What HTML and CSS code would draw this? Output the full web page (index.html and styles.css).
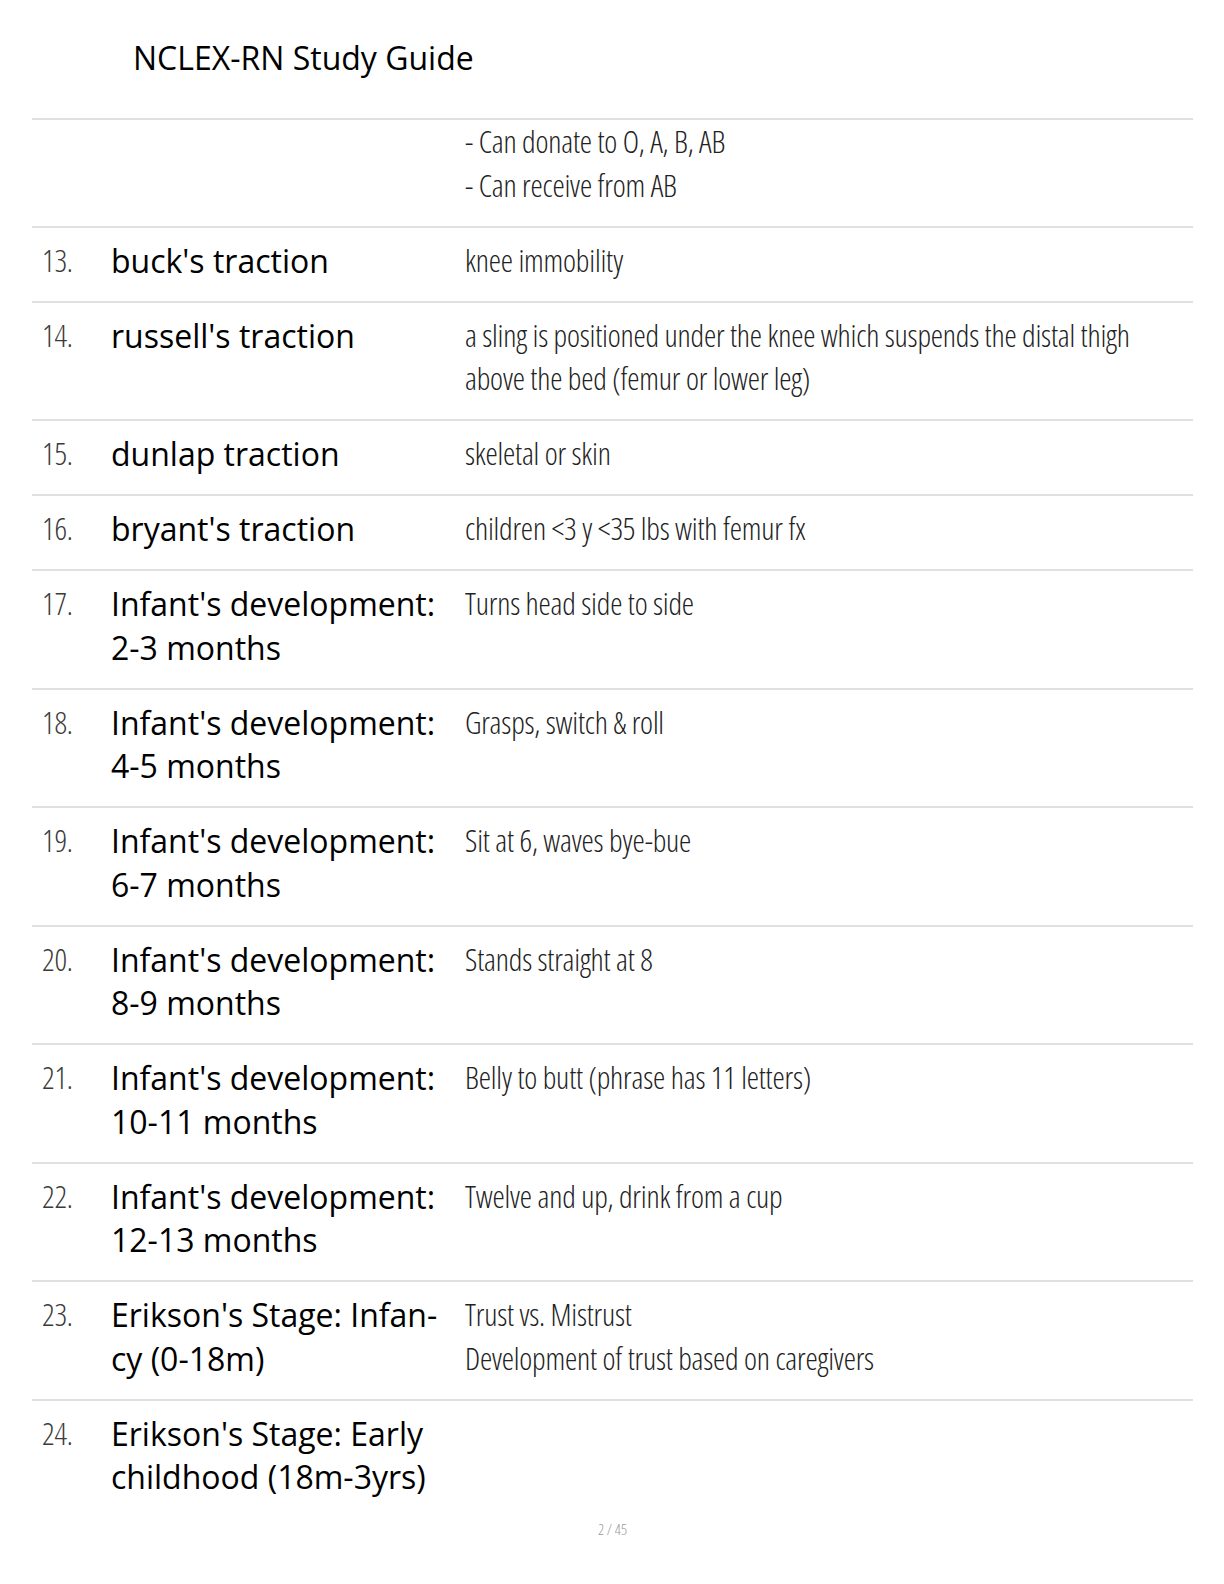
FILE: index.html
```html
<!DOCTYPE html>
<html lang="en">
<head>
    <meta charset="UTF-8">
    <meta name="viewport" content="width=device-width, initial-scale=1.0">
    <title>NCLEX-RN Study Guide</title>
    <link rel="stylesheet" href="styles.css">
</head>
<body>
    <div class="page">
        <h1 class="title">NCLEX-RN Study Guide</h1>

        <div class="cards">
            <div class="card card-cont">
                <div class="num"></div>
                <div class="term"></div>
                <div class="def">- Can donate to O, A, B, AB<br>- Can receive from AB</div>
            </div>
            <div class="card">
                <div class="num">13.</div>
                <div class="term">buck's traction</div>
                <div class="def">knee immobility</div>
            </div>
            <div class="card">
                <div class="num">14.</div>
                <div class="term">russell's traction</div>
                <div class="def">a sling is positioned under the knee which suspends the distal thigh above the bed (femur or lower leg)</div>
            </div>
            <div class="card">
                <div class="num">15.</div>
                <div class="term">dunlap traction</div>
                <div class="def">skeletal or skin</div>
            </div>
            <div class="card">
                <div class="num">16.</div>
                <div class="term">bryant's traction</div>
                <div class="def">children &lt;3 y &lt;35 lbs with femur fx</div>
            </div>
            <div class="card">
                <div class="num">17.</div>
                <div class="term">Infant's development: 2-3 months</div>
                <div class="def">Turns head side to side</div>
            </div>
            <div class="card">
                <div class="num">18.</div>
                <div class="term">Infant's development: 4-5 months</div>
                <div class="def">Grasps, switch &amp; roll</div>
            </div>
            <div class="card">
                <div class="num">19.</div>
                <div class="term">Infant's development: 6-7 months</div>
                <div class="def">Sit at 6, waves bye-bue</div>
            </div>
            <div class="card">
                <div class="num">20.</div>
                <div class="term">Infant's development: 8-9 months</div>
                <div class="def">Stands straight at 8</div>
            </div>
            <div class="card">
                <div class="num">21.</div>
                <div class="term">Infant's development: 10-11 months</div>
                <div class="def">Belly to butt (phrase has 11 letters)</div>
            </div>
            <div class="card">
                <div class="num">22.</div>
                <div class="term">Infant's development: 12-13 months</div>
                <div class="def">Twelve and up, drink from a cup</div>
            </div>
            <div class="card">
                <div class="num">23.</div>
                <div class="term">Erikson's Stage: Infan&shy;cy (0-18m)</div>
                <div class="def">Trust vs. Mistrust<br>Development of trust based on caregivers</div>
            </div>
            <div class="card">
                <div class="num">24.</div>
                <div class="term">Erikson's Stage: Early childhood (18m-3yrs)</div>
                <div class="def"></div>
            </div>
        </div>

        <div class="page-num">2 / 45</div>
    </div>
</body>
</html>
```

FILE: styles.css
```css
body {
    margin: 0;
    font-family: "Open Sans", Arial, sans-serif;
    background: white;
    color: #000;
}
.page {
    padding: 0 31px 0 32px;
}
.title {
    margin: 0;
    padding: 37px 0 0 101px;
    height: 118px;
    box-sizing: border-box;
    font-size: 32px;
    font-weight: 400;
    line-height: 42px;
    color: #000;
}
.card {
    display: grid;
    grid-template-columns: 55px 340px 1fr;
    column-gap: 14px;
    border-top: 2px solid #dfe0e4;
    padding: 11px 20px 18.5px 10px;
    font-size: 32px;
    line-height: 43.5px;
}
.card-cont {
    padding-top: 0;
}
.num, .def {
    font-size: 31px;
    font-weight: 300;
    font-stretch: 75%;
    letter-spacing: -0.2px;
    color: #222;
}
.num {
    color: #3a3a3a;
}
.term {
    color: #000;
}
.page-num {
    text-align: center;
    font-size: 15px;
    font-weight: 300;
    font-stretch: 75%;
    color: #999;
    padding-top: 2px;
}
```
